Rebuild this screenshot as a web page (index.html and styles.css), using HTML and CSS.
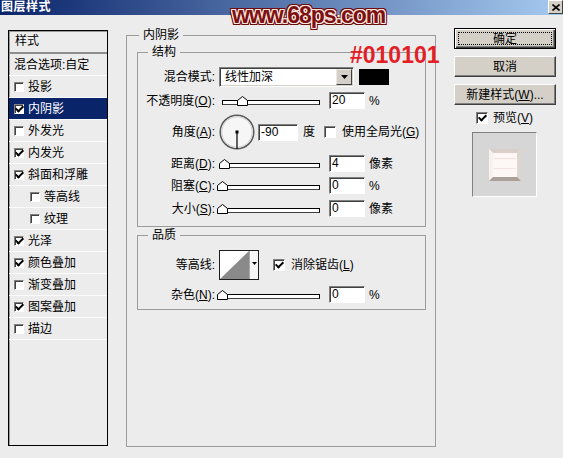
FILE: index.html
```html
<!DOCTYPE html>
<html lang="zh-CN">
<head>
<meta charset="utf-8">
<title>图层样式</title>
<link rel="stylesheet" href="styles.css">
</head>
<body>
<div class="window">
  <div class="titlebar">
    <span class="title">图层样式</span>
    <span class="close"><svg width="8" height="7" viewBox="0 0 8 7"><path d="M0.5 0.5 L7.5 6.5 M7.5 0.5 L0.5 6.5" stroke="#000" stroke-width="1.6"/></svg></span>
  </div>

  <div class="content">
    <div class="stylelist">
      <div class="list-head">样式</div>
      <div class="item">混合选项:自定</div>
      <div class="item"><span class="cb"></span>投影</div>
      <div class="item sel"><span class="cb on"></span>内阴影</div>
      <div class="item"><span class="cb"></span>外发光</div>
      <div class="item"><span class="cb on"></span>内发光</div>
      <div class="item"><span class="cb on"></span>斜面和浮雕</div>
      <div class="item sub"><span class="cb"></span>等高线</div>
      <div class="item sub"><span class="cb"></span>纹理</div>
      <div class="item"><span class="cb on"></span>光泽</div>
      <div class="item"><span class="cb on"></span>颜色叠加</div>
      <div class="item"><span class="cb"></span>渐变叠加</div>
      <div class="item"><span class="cb on"></span>图案叠加</div>
      <div class="item"><span class="cb"></span>描边</div>
    </div>

    <fieldset class="group outer">
      <legend>内阴影</legend>
      <fieldset class="group inner">
        <legend>结构</legend>
        <div class="row first h20">
          <span class="lbl">混合模式:</span>
          <span class="select"><span class="sel-text">线性加深</span><span class="drop"><svg width="7" height="4" viewBox="0 0 7 4"><polygon points="0,0 7,0 3.5,4" fill="#000"/></svg></span></span>
          <span class="swatch"></span>
        </div>
        <div class="row">
          <span class="lbl">不透明度(<u>O</u>):</span>
          <span class="slider"><span class="track"></span><span class="thumb" style="left:20%"><svg width="11" height="10" viewBox="0 0 11 10"><polygon points="0.5,9.5 0.5,4.5 5.5,0.5 10.5,4.5 10.5,9.5" fill="#fff" stroke="#000"/></svg></span></span>
          <span class="num">20</span>
          <span class="unit">%</span>
        </div>
        <div class="row angle">
          <span class="lbl">角度(<u>A</u>):</span>
          <span class="dial"><svg width="36" height="36" viewBox="0 0 36 36"><circle cx="18" cy="18" r="16.8" fill="#f6f6f6" stroke="#5c5c5c" stroke-width="1.5"/><circle cx="18" cy="18" r="15.4" fill="none" stroke="#cfcfcf" stroke-width="1"/><line x1="18" y1="18" x2="18" y2="35" stroke="#000" stroke-width="1.2"/><rect x="16.5" y="16.5" width="3" height="3" fill="#000"/></svg></span>
          <span class="num wide">-90</span>
          <span class="unit deg">度</span>
          <span class="cb big gap"></span>
          <span>使用全局光(<u>G</u>)</span>
        </div>
        <div class="row">
          <span class="lbl">距离(<u>D</u>):</span>
          <span class="slider"><span class="track"></span><span class="thumb" style="left:1.6%"><svg width="11" height="10" viewBox="0 0 11 10"><polygon points="0.5,9.5 0.5,4.5 5.5,0.5 10.5,4.5 10.5,9.5" fill="#fff" stroke="#000"/></svg></span></span>
          <span class="num">4</span>
          <span class="unit">像素</span>
        </div>
        <div class="row">
          <span class="lbl">阻塞(<u>C</u>):</span>
          <span class="slider"><span class="track"></span><span class="thumb" style="left:0%"><svg width="11" height="10" viewBox="0 0 11 10"><polygon points="0.5,9.5 0.5,4.5 5.5,0.5 10.5,4.5 10.5,9.5" fill="#fff" stroke="#000"/></svg></span></span>
          <span class="num">0</span>
          <span class="unit">%</span>
        </div>
        <div class="row m6">
          <span class="lbl">大小(<u>S</u>):</span>
          <span class="slider"><span class="track"></span><span class="thumb" style="left:0%"><svg width="11" height="10" viewBox="0 0 11 10"><polygon points="0.5,9.5 0.5,4.5 5.5,0.5 10.5,4.5 10.5,9.5" fill="#fff" stroke="#000"/></svg></span></span>
          <span class="num">0</span>
          <span class="unit">像素</span>
        </div>
      </fieldset>

      <fieldset class="group inner quality">
        <legend>品质</legend>
        <div class="row first h30">
          <span class="lbl">等高线:</span>
          <span class="contour"><svg class="curve" width="29" height="28" viewBox="0 0 29 28"><polygon points="0,28 29,0 29,28" fill="#8a8a8a"/></svg><span class="contour-drop"><svg width="5" height="3" viewBox="0 0 5 3"><polygon points="0,0 5,0 2.5,3" fill="#000"/></svg></span></span>
          <span class="cb big on aa"></span>
          <span>消除锯齿(<u>L</u>)</span>
        </div>
        <div class="row m6">
          <span class="lbl">杂色(<u>N</u>):</span>
          <span class="slider"><span class="track"></span><span class="thumb" style="left:0%"><svg width="11" height="10" viewBox="0 0 11 10"><polygon points="0.5,9.5 0.5,4.5 5.5,0.5 10.5,4.5 10.5,9.5" fill="#fff" stroke="#000"/></svg></span></span>
          <span class="num">0</span>
          <span class="unit">%</span>
        </div>
      </fieldset>
    </fieldset>

    <div class="side">
      <div class="btn default"><span class="focus">确定</span></div>
      <div class="btn">取消</div>
      <div class="btn">新建样式(<u>W</u>)...</div>
      <div class="preview-check"><span class="cb big on"></span><span>预览(<u>V</u>)</span></div>
      <div class="preview">
        <svg width="32" height="32" viewBox="0 0 32 32">
          <rect x="0" y="0" width="32" height="32" fill="#eee5df"/>
          <polygon points="0,0 32,0 28,4 4,4" fill="#d9cec8"/>
          <polygon points="0,0 4,4 4,28 0,32" fill="#f7f2ef"/>
          <polygon points="32,0 32,32 28,28 28,4" fill="#ddd5d0"/>
          <polygon points="0,32 32,32 28,28 4,28" fill="#a9a09a"/>
          <rect x="4" y="4" width="24" height="24" fill="#fdf8f5"/>
          <rect x="5" y="9" width="22" height="1" fill="#f1e0dc"/>
          <rect x="5" y="19" width="22" height="1" fill="#f3e6e2"/>
        </svg>
      </div>
    </div>
  </div>

  <div class="watermark">www.68ps.com</div>
  <div class="annot">#010101</div>
</div>
</body>
</html>
```

FILE: styles.css
```css
* { box-sizing: border-box; }
html, body { margin: 0; padding: 0; }
body {
  width: 563px;
  height: 458px;
  overflow: hidden;
  background: #ececec;
  font-family: "Liberation Sans", "Noto Sans CJK SC", sans-serif;
  font-size: 12px;
  line-height: 16px;
  color: #000;
}
u { text-decoration: underline; text-underline-offset: 1px; }

.window { position: relative; width: 563px; height: 458px; }

.titlebar {
  height: 15px;
  display: flex;
  justify-content: space-between;
  align-items: flex-start;
  background: linear-gradient(to right, #0a246a 0%, #a6caf0 100%);
}
.title {
  color: #fff;
  font-weight: bold;
  font-size: 12px;
  line-height: 15px;
  padding-left: 1px;
  letter-spacing: 0.5px;
}
.close {
  width: 15px;
  height: 14px;
  background: #d4d0c8;
  border: 1px solid;
  border-color: #fff #404040 #404040 #fff;
  display: flex;
  align-items: center;
  justify-content: center;
}
.close svg { display: block; }

.watermark {
  position: absolute;
  left: 232px;
  top: 2px;
  font-family: "Liberation Sans", sans-serif;
  font-weight: bold;
  font-size: 23px;
  line-height: 26px;
  letter-spacing: -1px;
  color: #7d1010;
  text-shadow:
    1px 0 #fde9e2, -1px 0 #fde9e2, 0 1px #fde9e2, 0 -1px #fde9e2,
    1px 1px #fde9e2, -1px -1px #fde9e2, 1px -1px #fde9e2, -1px 1px #fde9e2,
    2px 0 #6a0a0a, -2px 0 #6a0a0a, 0 2px #6a0a0a, 0 -2px #6a0a0a,
    2px 2px #6a0a0a, -2px -2px #6a0a0a, 2px -2px #6a0a0a, -2px 2px #6a0a0a;
}
.annot {
  position: absolute;
  left: 350px;
  top: 44px;
  font-family: "Liberation Sans", sans-serif;
  font-weight: bold;
  font-size: 23px;
  line-height: 23px;
  color: #e41e26;
}

.content {
  display: flex;
  align-items: flex-start;
  gap: 18px;
  padding: 12px 0 0 8px;
}

/* left style list */
.stylelist {
  flex: none;
  width: 100px;
  height: 416px;
  margin-top: 3px;
  border: 1px solid #000;
  box-shadow: inset 1px 1px 0 #9a9a9a;
}
.list-head {
  height: 23px;
  line-height: 21px;
  padding-left: 6px;
  border-bottom: 2px solid #8e8e8e;
}
.item {
  height: 22px;
  display: flex;
  align-items: center;
  padding-left: 5px;
  border-bottom: 1px solid #fbfbfb;
  white-space: nowrap;
}
.item.sel { background: #0a246a; color: #fff; }
.item.sub { padding-left: 21px; }

.cb {
  flex: none;
  width: 10px;
  height: 10px;
  margin-right: 4px;
  background: #fff;
  border: 1px solid;
  border-color: #808080 #fff #fff #808080;
  box-shadow: inset 1px 1px 0 #404040;
  display: flex;
  align-items: center;
  justify-content: center;
}
.cb.on::after {
  content: "";
  width: 3px;
  height: 6px;
  border: solid #000;
  border-width: 0 2px 2px 0;
  transform: translate(0, -1px) rotate(45deg);
}
.cb.big { width: 12px; height: 12px; }
.cb.gap { margin-left: 9px; margin-right: 6px; }
.cb.aa { margin-left: 14px; margin-right: 6px; }

/* group boxes */
fieldset.group {
  margin: 0;
  min-width: 0;
  border: 1px solid #9b9b9b;
}
.outer {
  flex: none;
  width: 310px;
  height: 420px;
  padding: 1px 9px 0 10px;
}
.outer > legend {
  margin-left: 2px;
  padding: 0 4px;
  line-height: 16px;
}
.inner { padding: 7px 0 9px 0; }
.inner > legend {
  margin-left: 10px;
  padding: 0 4px;
  line-height: 16px;
}
.quality { margin-top: 7px; padding: 7px 0 6px 0; }

.row {
  display: flex;
  align-items: center;
  height: 17px;
  margin-top: 5px;
  white-space: nowrap;
}
.row.first { margin-top: 0; }
.row.m6 { margin-top: 6px; }
.row.h20 { height: 20px; }
.row.h30 { height: 30px; }
.row.angle { height: 36px; }

.lbl { flex: none; width: 77px; text-align: right; }

.select {
  flex: none;
  margin-left: 4px;
  width: 135px;
  height: 20px;
  background: #fff;
  border: 1px solid;
  border-color: #808080 #fff #fff #808080;
  box-shadow: inset 1px 1px 0 #404040, inset -1px -1px 0 #d4d0c8;
  display: flex;
  align-items: center;
  justify-content: space-between;
  padding: 0 1px 0 5px;
}
.drop {
  width: 16px;
  height: 16px;
  background: #d4d0c8;
  border: 1px solid;
  border-color: #e8e8e8 #404040 #404040 #e8e8e8;
  display: flex;
  align-items: center;
  justify-content: center;
}
.drop svg { display: block; }
.swatch {
  flex: none;
  margin-left: 5px;
  width: 30px;
  height: 16px;
  background: #010101;
}

.slider {
  flex: none;
  position: relative;
  margin-left: 7px;
  width: 98px;
  height: 10px;
}
.track {
  display: block;
  margin-top: 4px;
  height: 5px;
  border: 1px solid #000;
  border-bottom-color: #404040;
  background: #fff;
}
.thumb {
  position: absolute;
  top: 0;
  margin-left: -5px;
  width: 11px;
  height: 10px;
}
.thumb svg { display: block; }

.num {
  flex: none;
  margin-left: 9px;
  width: 36px;
  height: 17px;
  background: #fff;
  border: 1px solid;
  border-color: #808080 #fff #fff #808080;
  box-shadow: inset 1px 1px 0 #404040;
  padding-left: 2px;
  line-height: 15px;
}
.num.wide { width: 40px; margin-left: 3px; }
.unit { margin-left: 4px; }
.unit.deg { margin-left: 5px; }

.dial { flex: none; margin-left: 4px; width: 36px; height: 36px; }
.dial svg { display: block; }

.contour {
  flex: none;
  margin-left: 4px;
  width: 40px;
  height: 30px;
  display: flex;
  border: 1px solid #1e1e1e;
  background: #fff;
}
.contour .curve { display: block; flex: none; }
.contour-drop {
  flex: 1;
  border-left: 1px solid #a8a8a8;
  background: #f6f6f6;
  display: flex;
  justify-content: center;
  padding-top: 11px;
}
.contour-drop svg { display: block; }

/* right column */
.side {
  flex: none;
  width: 102px;
  margin-top: 1px;
  display: flex;
  flex-direction: column;
}
.btn {
  height: 21px;
  margin-bottom: 7px;
  background: #d4d0c8;
  border: 1px solid;
  border-color: #fff #404040 #404040 #fff;
  box-shadow: inset -1px -1px 0 #808080;
  display: flex;
  align-items: center;
  justify-content: center;
  white-space: nowrap;
}
.btn.default {
  border-color: #000;
  box-shadow: inset 1px 1px 0 #fff, inset -1px -1px 0 #404040, inset -2px -2px 0 #808080;
  padding: 3px;
}
.focus {
  flex: 1;
  align-self: stretch;
  border: 1px dotted #000;
  display: flex;
  align-items: center;
  justify-content: center;
}
.preview-check {
  display: flex;
  align-items: center;
  height: 12px;
  padding-left: 22px;
}
.preview-check .cb { margin-right: 5px; }
.preview {
  margin: 8px 0 0 18px;
  width: 65px;
  height: 65px;
  background: #d6d6d6;
  border: 1px solid;
  border-color: #808080 #fff #fff #808080;
  display: flex;
  align-items: center;
  justify-content: center;
}
.preview svg { display: block; }
```
